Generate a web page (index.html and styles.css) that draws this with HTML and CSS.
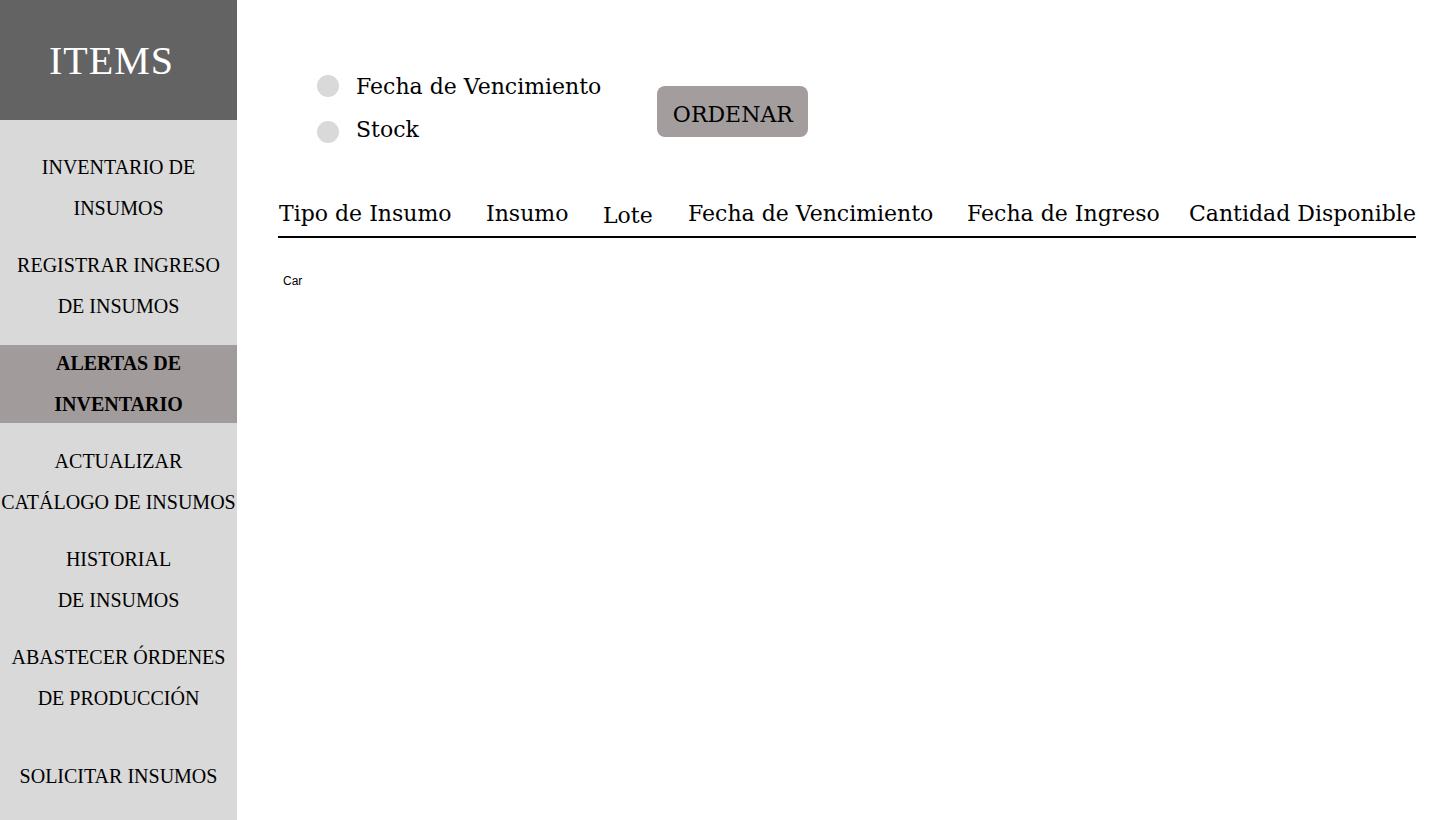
FILE: index.html
```html
<!DOCTYPE html>
<html lang="es">
<head>
<meta charset="utf-8">
<title>Alertas de Inventario</title>
<link rel="stylesheet" href="styles.css">
</head>
<body>
<div class="app">
  <aside class="sidebar">
    <div class="brand">ITEMS</div>
    <nav class="nav">
      <a class="nav-item">INVENTARIO DE<br>INSUMOS</a>
      <a class="nav-item">REGISTRAR INGRESO<br>DE INSUMOS</a>
      <a class="nav-item active">ALERTAS DE<br>INVENTARIO</a>
      <a class="nav-item">ACTUALIZAR<br>CATÁLOGO DE INSUMOS</a>
      <a class="nav-item">HISTORIAL<br>DE INSUMOS</a>
      <a class="nav-item">ABASTECER ÓRDENES<br>DE PRODUCCIÓN</a>
      <a class="nav-item">SOLICITAR INSUMOS</a>
    </nav>
  </aside>
  <main class="main">
    <div class="toolbar">
      <div class="radios">
        <label class="radio-row"><span class="radio"></span><span class="radio-label">Fecha de Vencimiento</span></label>
        <label class="radio-row"><span class="radio"></span><span class="radio-label stock">Stock</span></label>
      </div>
      <button class="btn">ORDENAR</button>
    </div>
    <div class="table-head">
      <div class="th">Tipo de Insumo</div>
      <div class="th">Insumo</div>
      <div class="th lote">Lote</div>
      <div class="th">Fecha de Vencimiento</div>
      <div class="th">Fecha de Ingreso</div>
      <div class="th">Cantidad Disponible</div>
    </div>
    <div class="table-body">
      <div class="cell">Car</div>
    </div>
  </main>
</div>
</body>
</html>
```

FILE: styles.css
```css
html, body {
  margin: 0;
  padding: 0;
  background: #ffffff;
}

.app {
  display: flex;
  height: 820px;
  width: 1440px;
}

.sidebar {
  width: 237px;
  flex: 0 0 237px;
  background: #d9d9d9;
  display: flex;
  flex-direction: column;
  font-family: "Liberation Serif", "Times New Roman", serif;
  color: #000;
}

.brand {
  height: 120px;
  background: #636363;
  color: #ffffff;
  font-size: 40px;
  letter-spacing: 1px;
  display: flex;
  align-items: center;
  justify-content: center;
  padding-right: 14px;
}

.nav {
  display: flex;
  flex-direction: column;
  gap: 20px;
  padding-top: 29px;
}

.nav-item {
  height: 78px;
  display: flex;
  align-items: center;
  justify-content: center;
  text-align: center;
  font-size: 20px;
  line-height: 41px;
  white-space: nowrap;
  color: #000;
}

.nav-item.active {
  background: #a19b9b;
  font-weight: bold;
}

.main {
  flex: 1;
  padding: 0 24px 0 41px;
  font-family: "DejaVu Serif", serif;
  color: #000;
}

.toolbar {
  display: flex;
  align-items: flex-start;
  margin-top: 63px;
  margin-left: 39px;
}

.radios {
  display: flex;
  flex-direction: column;
}

.radio-row {
  display: flex;
  align-items: center;
  height: 46px;
  gap: 17px;
}

.radio {
  width: 22px;
  height: 22px;
  border-radius: 50%;
  background: #d9d9d9;
}

.radio-label {
  font-size: 22px;
}

.radio-label.stock {
  position: relative;
  top: -3px;
}

.btn {
  margin-top: 23px;
  margin-left: 56px;
  width: 151px;
  height: 51px;
  border: none;
  border-radius: 8px;
  background: #a39d9d;
  font-family: "DejaVu Serif", serif;
  font-size: 22px;
  color: #000;
  padding: 6px 0 0 0;
}

.table-head {
  display: grid;
  grid-template-columns: 207px 117px 85px 279px 222px auto;
  margin-top: 46px;
  padding: 0 0 9px 1px;
  border-bottom: 2px solid #000;
  font-size: 22px;
  line-height: 26px;
}

.th {
  white-space: nowrap;
}

.th.lote {
  position: relative;
  top: 2px;
}

.table-body {
  padding: 36px 0 0 5px;
}

.cell {
  font-family: "Liberation Sans", Arial, sans-serif;
  font-size: 12px;
}
```
